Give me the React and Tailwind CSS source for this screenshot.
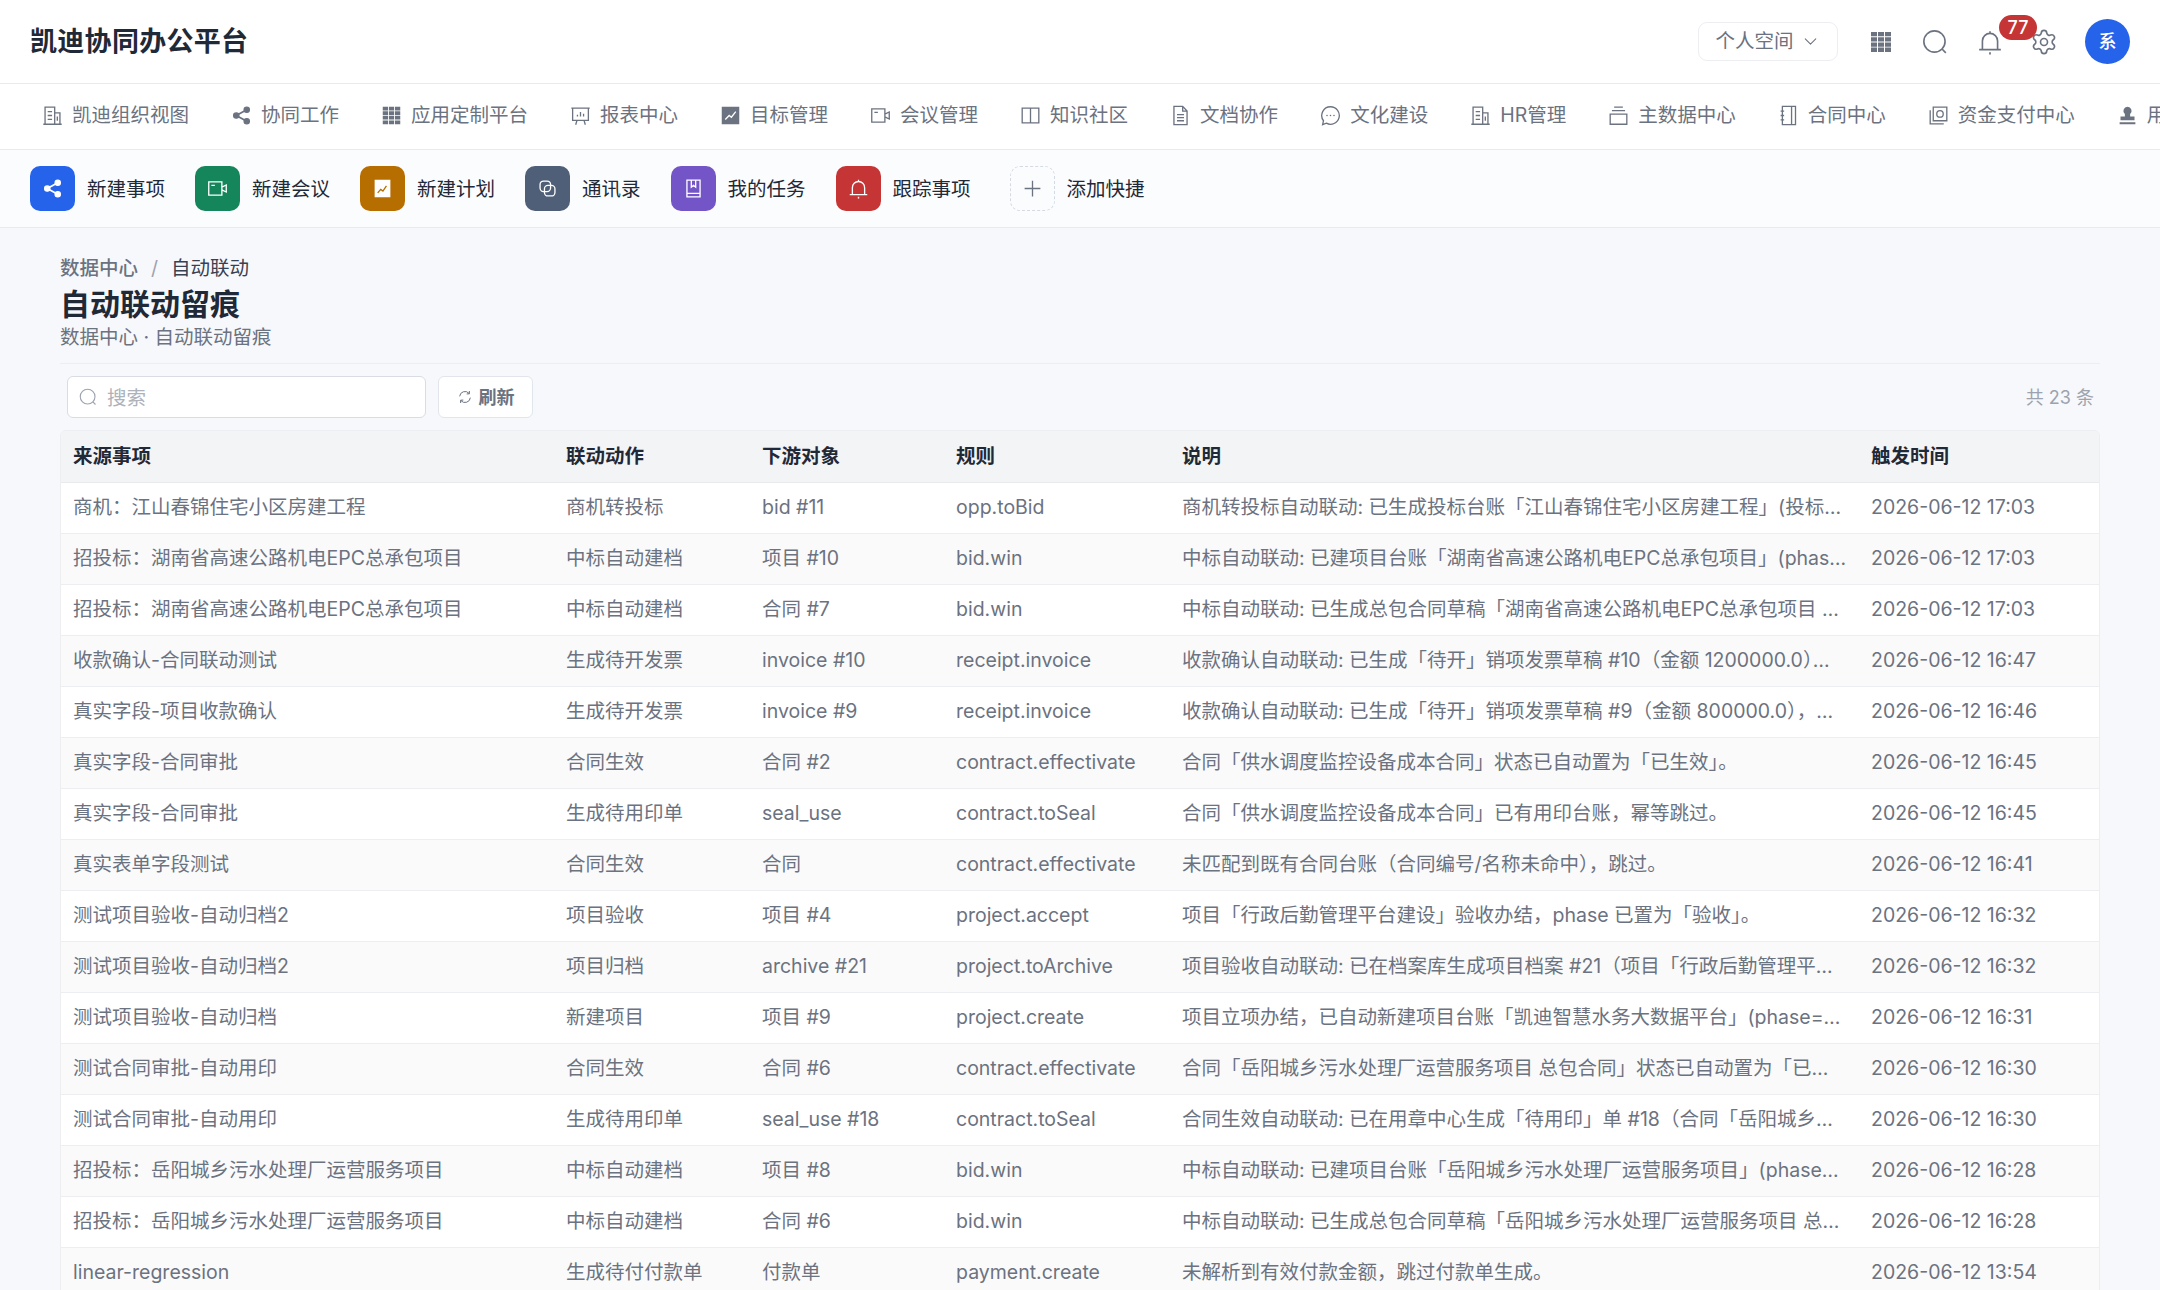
import { ChevronDown, Settings } from 'lucide-react'

const Svg = ({ className = 'w-5 h-5', children }) => (
  <svg viewBox="0 0 24 24" fill="none" stroke="currentColor" strokeWidth="1.5" className={className}>
    {children}
  </svg>
)

const Building = p => <Svg {...p}><path d="M1.500 22h21M3.500 22V2.500h11V22M14.500 9H20.500V22M6.500 7.500h5M6.500 12h5M6.500 16.500h5M17.500 13v5" /></Svg>
const Share = p => (
  <Svg {...p}>
    <circle cx="18" cy="5.500" r="3" fill="currentColor" />
    <circle cx="18" cy="18.500" r="3" fill="currentColor" />
    <circle cx="6" cy="12" r="3" fill="currentColor" />
    <path strokeWidth="2" d="M18 5.500 6 12l12 6.500" />
  </Svg>
)
const Grid = p => (
  <Svg {...p}>
    <path
      stroke="none"
      fill="currentColor"
      d="M2 2h6v4.300H2zM9 2h6v4.300H9zM16 2h6v4.300h-6zM2 7.200h6v4.300H2zM9 7.200h6v4.300H9zM16 7.200h6v4.300h-6zM2 12.400h6v4.300H2zM9 12.400h6v4.300H9zM16 12.400h6v4.300h-6zM2 17.600h6V22H2zM9 17.600h6V22H9zM16 17.600h6V22h-6z"
    />
  </Svg>
)
const Board = p => <Svg {...p}><path d="M1.500 3.500h21M3 3.500v14h18v-14M8 17.500l-1.500 5M16 17.500l1.500 5M8.500 13v-2M12 13V8M15.500 13v-3" /></Svg>
const Chart = p => (
  <Svg {...p}>
    <rect x="2" y="2" width="20" height="20" fill="currentColor" stroke="none" />
    <path stroke="#fff" d="m6 16.500 4.500-4.500 2.500 2 5-6.500" />
  </Svg>
)
const Video = p => <Svg {...p}><path d="M2 4.500h15v15H2zM17 10.500l5-2.500v8l-5-2.500M5 8.500h4" /></Svg>
const Book = p => <Svg {...p}><path d="M2.500 3.500h19v17h-19zM12 3.500v17" /></Svg>
const Doc = p => <Svg {...p}><path d="M4.500 1.500h10l5 5.500v15.500h-15zM14.500 1.500V7h5M8 11h8M8 14.500h8M8 18h8" /></Svg>
const Chat = p => (
  <Svg {...p}>
    <path d="M12 2a10 10 0 1 1-4.700 18.800L3 22.500l1-4.500A10 10 0 0 1 12 2z" />
    <path strokeLinecap="round" strokeWidth="1.800" d="M8 12h.01M12 12h.01M16 12h.01" />
  </Svg>
)
const Stack = p => <Svg {...p}><path d="M7 2.500h10M4.500 6.500h15M2.500 10.500h19v11.500h-19z" /></Svg>
const Notebook = p => <Svg {...p}><path d="M5 1.500h15v21H5zM15.500 1.500v21M3 7h4M3 12h4M3 17h4" /></Svg>
const Safe = p => (
  <Svg {...p}>
    <path d="M6 2.500h15.500V18H6zM2.500 6v15.500H18" />
    <circle cx="13.700" cy="10.200" r="3.700" />
  </Svg>
)
const Stamp = p => (
  <Svg {...p}>
    <path
      stroke="none"
      fill="currentColor"
      d="M12 2a4.700 4.700 0 0 1 3 8.300V13h5v4.500H4V13h5v-2.700A4.700 4.700 0 0 1 12 2zM3 19.800h18V22H3z"
    />
  </Svg>
)
const Bell = p => (
  <Svg {...p}>
    <path d="M2 19h20M5 19v-8a7 7 0 0 1 14 0v8M12 2v2" />
    <path strokeWidth="2" d="M11.200 22.500h1.600" />
  </Svg>
)
const Search = p => (
  <Svg {...p}>
    <circle cx="11.500" cy="11.500" r="9.800" />
    <path d="m18.500 18.500 3.500 3.500" />
  </Svg>
)
const Links = p => (
  <Svg {...p}>
    <rect x="3.500" y="3.500" width="12" height="12" rx="4" />
    <rect x="8.500" y="8.500" width="12" height="12" rx="4" />
  </Svg>
)
const BookMark = p => <Svg {...p}><path d="M4.500 2.500h15v19h-15zM4.500 17.500h15M9.500 2.500v8l2.500-2 2.500 2v-8" /></Svg>
const Plus = p => <Svg {...p}><path d="M12 3v18M3 12h18" /></Svg>
const Refresh = p => (
  <Svg {...p}>
    <path d="M4 11a8 8 0 0 1 14-4.500M20 13a8 8 0 0 1-14 4.500" />
    <path d="m18.500 3 .2 4.200-4.200.2M5.500 21l-.2-4.200 4.200-.2" />
  </Svg>
)
const PlanChart = p => (
  <svg viewBox="0 0 24 24" className={p.className}>
    <rect x="3" y="2" width="18" height="20" fill="#fff" />
    <path fill="none" stroke="#b76e00" strokeWidth="1.500" d="m6.500 17 3.500-4 2.500 2 4-6" />
  </svg>
)

const navItems = [
  [Building, '凯迪组织视图'],
  [Share, '协同工作'],
  [Grid, '应用定制平台'],
  [Board, '报表中心'],
  [Chart, '目标管理'],
  [Video, '会议管理'],
  [Book, '知识社区'],
  [Doc, '文档协作'],
  [Chat, '文化建设'],
  [Building, 'HR管理'],
  [Stack, '主数据中心'],
  [Notebook, '合同中心'],
  [Safe, '资金支付中心'],
  [Stamp, '用户中心'],
]

const quickItems = [
  [Share, '新建事项', 'bg-[#2563eb]'],
  [Video, '新建会议', 'bg-[#15865b]'],
  [PlanChart, '新建计划', 'bg-[#b76e00]'],
  [Links, '通讯录', 'bg-[#4f5f78]'],
  [BookMark, '我的任务', 'bg-[#7455c8]'],
  [Bell, '跟踪事项', 'bg-[#c53535]'],
]

const rows = [
  ['商机：江山春锦住宅小区房建工程', '商机转投标', 'bid #11', 'opp.toBid', '商机转投标自动联动: 已生成投标台账「江山春锦住宅小区房建工程」(投标阶段已同步)', '2026-06-12 17:03'],
  ['招投标：湖南省高速公路机电EPC总承包项目', '中标自动建档', '项目 #10', 'bid.win', '中标自动联动: 已建项目台账「湖南省高速公路机电EPC总承包项目」(phase=中标)', '2026-06-12 17:03'],
  ['招投标：湖南省高速公路机电EPC总承包项目', '中标自动建档', '合同 #7', 'bid.win', '中标自动联动: 已生成总包合同草稿「湖南省高速公路机电EPC总承包项目 总包合同」', '2026-06-12 17:03'],
  ['收款确认-合同联动测试', '生成待开发票', 'invoice #10', 'receipt.invoice', '收款确认自动联动: 已生成「待开」销项发票草稿 #10（金额 1200000.0），请财务开票', '2026-06-12 16:47'],
  ['真实字段-项目收款确认', '生成待开发票', 'invoice #9', 'receipt.invoice', '收款确认自动联动: 已生成「待开」销项发票草稿 #9（金额 800000.0），请财务开票处理', '2026-06-12 16:46'],
  ['真实字段-合同审批', '合同生效', '合同 #2', 'contract.effectivate', '合同「供水调度监控设备成本合同」状态已自动置为「已生效」。', '2026-06-12 16:45'],
  ['真实字段-合同审批', '生成待用印单', 'seal_use', 'contract.toSeal', '合同「供水调度监控设备成本合同」已有用印台账，幂等跳过。', '2026-06-12 16:45'],
  ['真实表单字段测试', '合同生效', '合同', 'contract.effectivate', '未匹配到既有合同台账（合同编号/名称未命中），跳过。', '2026-06-12 16:41'],
  ['测试项目验收-自动归档2', '项目验收', '项目 #4', 'project.accept', '项目「行政后勤管理平台建设」验收办结，phase 已置为「验收」。', '2026-06-12 16:32'],
  ['测试项目验收-自动归档2', '项目归档', 'archive #21', 'project.toArchive', '项目验收自动联动: 已在档案库生成项目档案 #21（项目「行政后勤管理平台建设」）', '2026-06-12 16:32'],
  ['测试项目验收-自动归档', '新建项目', '项目 #9', 'project.create', '项目立项办结，已自动新建项目台账「凯迪智慧水务大数据平台」(phase=立项阶段)', '2026-06-12 16:31'],
  ['测试合同审批-自动用印', '合同生效', '合同 #6', 'contract.effectivate', '合同「岳阳城乡污水处理厂运营服务项目 总包合同」状态已自动置为「已生效」。', '2026-06-12 16:30'],
  ['测试合同审批-自动用印', '生成待用印单', 'seal_use #18', 'contract.toSeal', '合同生效自动联动: 已在用章中心生成「待用印」单 #18（合同「岳阳城乡污水处理厂」）', '2026-06-12 16:30'],
  ['招投标：岳阳城乡污水处理厂运营服务项目', '中标自动建档', '项目 #8', 'bid.win', '中标自动联动: 已建项目台账「岳阳城乡污水处理厂运营服务项目」(phase=中标阶段)', '2026-06-12 16:28'],
  ['招投标：岳阳城乡污水处理厂运营服务项目', '中标自动建档', '合同 #6', 'bid.win', '中标自动联动: 已生成总包合同草稿「岳阳城乡污水处理厂运营服务项目 总包合同」', '2026-06-12 16:28'],
  ['linear-regression', '生成待付付款单', '付款单', 'payment.create', '未解析到有效付款金额，跳过付款单生成。', '2026-06-12 13:54'],
]

const headers = ['来源事项', '联动动作', '下游对象', '规则', '说明', '触发时间']

export default function App() {
  return (
    <div className="h-screen overflow-hidden bg-[#f7f8fb] font-['Inter','Noto_Sans_CJK_SC',sans-serif] text-[19.5px] text-[#6b7280]">
      <header className="h-[84px] bg-white border-b border-[#e8eaee] flex items-center pl-[30px] pr-[30px]">
        <div className="pt-[2px] text-[27px] tracking-[0.3px] font-semibold text-[#1f2937]">凯迪协同办公平台</div>
        <div className="ml-auto flex items-center">
          <div className="w-[140px] h-[39px] border border-[#eceef2] rounded-[9px] flex items-center justify-center gap-[6px]">
            <span className="pt-[1px]">个人空间</span>
            <ChevronDown className="w-[21px] h-[21px]" strokeWidth={1.2} />
          </div>
          <Grid className="w-[24px] h-[24px] ml-[31px]" />
          <Search className="w-[26px] h-[26px] ml-[29px]" />
          <div className="relative ml-[29px] w-[26px] h-[26px]">
            <Bell className="w-[26px] h-[26px]" />
            <span className="absolute left-[22px] top-[-14px] w-[38px] h-[25px] rounded-full bg-[#c53535] text-white text-[18px] font-medium leading-[25px] text-center">77</span>
          </div>
          <Settings className="w-[28px] h-[28px] ml-[27px]" strokeWidth={1.4} />
          <div className="ml-[27px] w-[45px] h-[45px] rounded-full bg-[#2563eb] text-white text-[18px] font-medium flex items-center justify-center">系</div>
        </div>
      </header>

      <nav className="h-[66px] pb-[2px] bg-white border-b border-[#e8eaee] flex items-center px-[21px] overflow-hidden">
        {navItems.map(([Icon, label]) => (
          <div key={label} className="flex items-center shrink-0 gap-[9px] px-[21px] whitespace-nowrap">
            <Icon className="w-[21px] h-[21px]" />
            <span>{label}</span>
          </div>
        ))}
      </nav>

      <div className="h-[78px] bg-[#fbfcfe] border-b border-[#e8eaee] flex items-center pl-[30px] gap-[30px]">
        {quickItems.map(([Icon, label, bg]) => (
          <div key={label} className="flex items-center gap-[12px]">
            <div className={`w-[45px] h-[45px] rounded-[10px] flex items-center justify-center text-white ${bg}`}>
              <Icon className="w-[21px] h-[21px]" />
            </div>
            <span className="pt-[2px] text-[#1f2937]">{label}</span>
          </div>
        ))}
        <div className="ml-[9px] flex items-center gap-[12px]">
          <div className="w-[45px] h-[45px] rounded-[10px] border border-dashed border-[#d5d9e2] flex items-center justify-center">
            <Plus className="w-[21px] h-[21px]" />
          </div>
          <span className="pt-[2px] text-[#1f2937]">添加快捷</span>
        </div>
      </div>

      <main className="px-[60px] pt-[27px]">
        <div className="leading-[27px] flex items-center">
          <span className="font-medium">数据中心</span>
          <span className="mx-[13px] text-[#9ca3af]">/</span>
          <span className="text-[#374151]">自动联动</span>
        </div>
        <h1 className="text-[30px] font-bold leading-[45px] text-[#1f2937]">自动联动留痕</h1>
        <div className="leading-[21px]">数据中心 · 自动联动留痕</div>
        <div className="mt-[15px] border-t border-[#eceef2]" />

        <div className="mt-[12px] px-[7px] flex items-center gap-[12px]">
          <div className="w-[359px] h-[42px] bg-white border border-[#d9dce3] rounded-[6px] flex items-center pl-[11px] gap-[10px]">
            <Search className="w-[18px] h-[18px] text-[#9ca3af]" />
            <span className="pt-[3px] text-[#adb2bb]">搜索</span>
          </div>
          <div className="w-[95px] h-[42px] bg-white border border-[#e2e5eb] rounded-[6px] flex items-center justify-center gap-[6px] font-semibold">
            <Refresh className="w-[16px] h-[16px]" />
            <span className="pt-[1px] text-[18px]">刷新</span>
          </div>
          <div className="ml-auto mr-[-1px] text-[#9ca3af] text-[18px]">共 23 条</div>
        </div>

        <div className="mt-[12px] border border-[#eceef2] rounded-t-[6px] overflow-hidden">
          <table className="w-full table-fixed border-collapse">
            <colgroup>
              <col className="w-[493px]" />
              <col className="w-[196px]" />
              <col className="w-[194px]" />
              <col className="w-[226px]" />
              <col className="w-[689px]" />
              <col />
            </colgroup>
            <thead>
              <tr className="h-[51px] bg-[#f3f4f6] border-b border-[#e8eaee]">
                {headers.map(h => (
                  <th key={h} className="px-[12px] pt-[1px] text-left font-semibold text-[#1f2937]">{h}</th>
                ))}
              </tr>
            </thead>
            <tbody>
              {rows.map((row, i) => (
                <tr key={i} className={`h-[51px] border-b border-[#eceef2] ${i % 2 ? 'bg-[#fafafa]' : 'bg-white'}`}>
                  {row.map((cell, j) => (
                    <td key={j} className="px-[12px] truncate">{cell}</td>
                  ))}
                </tr>
              ))}
            </tbody>
          </table>
        </div>
      </main>
    </div>
  )
}
